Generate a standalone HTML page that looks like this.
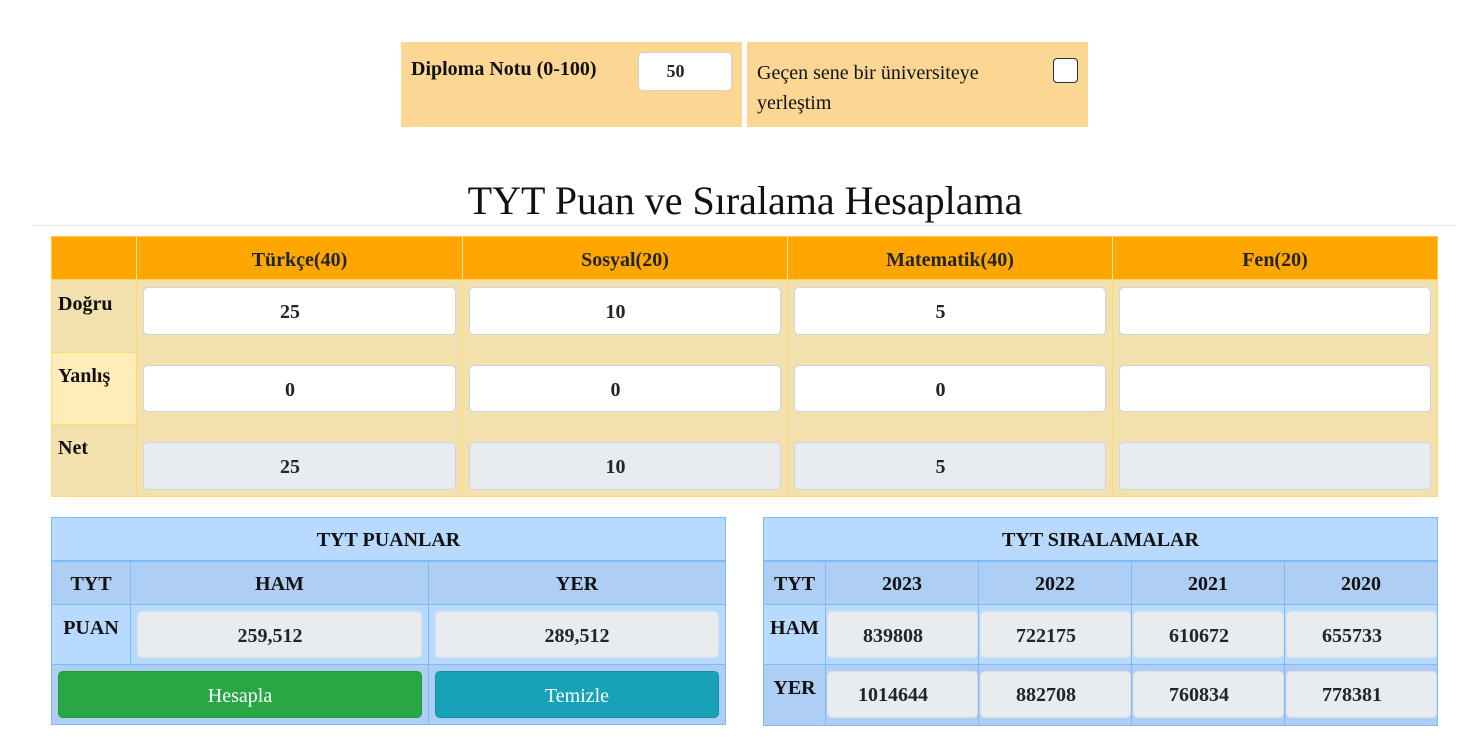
<!DOCTYPE html>
<html lang="tr">
<head>
<meta charset="utf-8">
<title>TYT Puan ve Sıralama Hesaplama</title>
<style>
html,body{margin:0;padding:0;background:#fff;width:1484px;height:747px;overflow:hidden}
body{position:relative;font-family:"Liberation Serif",serif;font-size:20px;color:#212529}
.a{position:absolute;box-sizing:border-box}
.t{position:absolute;white-space:nowrap;text-align:center;box-sizing:border-box}
.b{font-weight:bold;margin-top:1px}
.i{position:absolute;box-sizing:border-box;background:#fff;border:1px solid #ced4da;border-radius:5px;font-weight:bold;color:#212529;text-align:center;padding-right:19px}
.d{background:#e9ecef}
.n{border-color:#dde1e6;background:#e9ecef;padding-right:0}
</style>
</head>
<body>

<!-- top boxes -->
<div class="a" style="left:401px;top:42px;width:341px;height:85px;background:#fbd793"></div>
<div class="a" style="left:747px;top:42px;width:341px;height:85px;background:#fbd793"></div>
<div class="t b" style="left:411px;top:56px;line-height:24px;color:#111">Diploma Notu (0-100)</div>
<div class="i" style="left:638px;top:52px;width:94px;height:39px;line-height:37px;font-size:18px;padding-right:19px">50</div>
<div class="t" style="left:757px;top:58px;line-height:30px;text-align:left;color:#111">Geçen sene bir üniversiteye<br>yerleştim</div>
<div class="a" style="left:1053px;top:58px;width:25px;height:25px;background:#fff;border:1.5px solid #1d3045;border-radius:4px"></div>

<!-- title -->
<div class="t" style="left:33px;top:177px;width:1424px;line-height:48px;font-size:40px;color:#111">TYT Puan ve Sıralama Hesaplama</div>
<div class="a" style="left:32px;top:225px;width:1424px;height:1px;background:#e3e5e7"></div>

<!-- main table -->
<div class="a" style="left:51px;top:236px;width:1387px;height:261px;background:#f2e1ae"></div>
<div class="a" style="left:51px;top:236px;width:1387px;height:44px;background:#ffa700;border:1px solid #ffc94d;border-bottom:1px solid #ffd45e"></div>
<div class="a" style="left:52px;top:352px;width:84px;height:73px;background:#ffecb9;border-top:1px solid #ffdb6e;border-bottom:1px solid #ffdb6e"></div>
<div class="a" style="left:51px;top:280px;width:1px;height:217px;background:#ffdb6e"></div>
<div class="a" style="left:1437px;top:280px;width:1px;height:217px;background:#ffdb6e"></div>
<div class="a" style="left:51px;top:496px;width:1387px;height:1px;background:#ffdb6e"></div>
<div class="a" style="left:136px;top:237px;width:1px;height:42px;background:#ffe9a8"></div>
<div class="a" style="left:462px;top:237px;width:1px;height:42px;background:#ffe9a8"></div>
<div class="a" style="left:787px;top:237px;width:1px;height:42px;background:#ffe9a8"></div>
<div class="a" style="left:1112px;top:237px;width:1px;height:42px;background:#ffe9a8"></div>
<div class="a" style="left:136px;top:280px;width:1px;height:217px;background:#ffdb6e"></div>
<div class="a" style="left:462px;top:280px;width:1px;height:217px;background:#ffdb6e"></div>
<div class="a" style="left:787px;top:280px;width:1px;height:217px;background:#ffdb6e"></div>
<div class="a" style="left:1112px;top:280px;width:1px;height:217px;background:#ffdb6e"></div>

<div class="t b" style="left:137px;top:247px;width:325px;line-height:24px">Türkçe(40)</div>
<div class="t b" style="left:463px;top:247px;width:324px;line-height:24px">Sosyal(20)</div>
<div class="t b" style="left:788px;top:247px;width:324px;line-height:24px">Matematik(40)</div>
<div class="t b" style="left:1113px;top:247px;width:324px;line-height:24px">Fen(20)</div>

<div class="t b" style="left:58px;top:291px;line-height:24px;color:#111">Doğru</div>
<div class="t b" style="left:58px;top:363px;line-height:24px;color:#111">Yanlış</div>
<div class="t b" style="left:58px;top:435px;line-height:24px;color:#111">Net</div>

<div class="i" style="left:143px;top:287px;width:313px;height:48px;line-height:48px">25</div>
<div class="i" style="left:469px;top:287px;width:312px;height:48px;line-height:48px">10</div>
<div class="i" style="left:794px;top:287px;width:312px;height:48px;line-height:48px">5</div>
<div class="i" style="left:1119px;top:287px;width:312px;height:48px"></div>

<div class="i" style="left:143px;top:365px;width:313px;height:47px;line-height:48px">0</div>
<div class="i" style="left:469px;top:365px;width:312px;height:47px;line-height:48px">0</div>
<div class="i" style="left:794px;top:365px;width:312px;height:47px;line-height:48px">0</div>
<div class="i" style="left:1119px;top:365px;width:312px;height:47px"></div>

<div class="i d" style="left:143px;top:442px;width:313px;height:48px;line-height:48px">25</div>
<div class="i d" style="left:469px;top:442px;width:312px;height:48px;line-height:48px">10</div>
<div class="i d" style="left:794px;top:442px;width:312px;height:48px;line-height:48px">5</div>
<div class="i d" style="left:1119px;top:442px;width:312px;height:48px"></div>

<!-- left blue table -->
<div class="a" style="left:51px;top:517px;width:675px;height:208px;background:#b8daff;border:1px solid #7abaff"></div>
<div class="a" style="left:52px;top:562px;width:673px;height:42px;background:#aecff3"></div>
<div class="a" style="left:52px;top:665px;width:673px;height:59px;background:#aecff3"></div>
<div class="a" style="left:52px;top:560px;width:673px;height:2px;background:#7abaff"></div>
<div class="a" style="left:52px;top:604px;width:673px;height:1px;background:#7abaff"></div>
<div class="a" style="left:52px;top:664px;width:673px;height:1px;background:#7abaff"></div>
<div class="a" style="left:130px;top:562px;width:1px;height:102px;background:#7abaff"></div>
<div class="a" style="left:428px;top:562px;width:1px;height:162px;background:#7abaff"></div>

<div class="t b" style="left:52px;top:527px;width:673px;line-height:24px;color:#111">TYT PUANLAR</div>
<div class="t b" style="left:52px;top:571px;width:78px;line-height:24px;color:#111">TYT</div>
<div class="t b" style="left:131px;top:571px;width:297px;line-height:24px;color:#111">HAM</div>
<div class="t b" style="left:429px;top:571px;width:296px;line-height:24px;color:#111">YER</div>
<div class="t b" style="left:52px;top:615px;width:78px;line-height:24px;color:#111">PUAN</div>

<div class="i n" style="left:137px;top:611px;width:285px;height:47px;line-height:48px;padding-right:19px">259,512</div>
<div class="i n" style="left:435px;top:611px;width:284px;height:47px;line-height:48px;padding-right:0">289,512</div>

<div class="a" style="left:58px;top:671px;width:364px;height:47px;line-height:48px;background:#28a745;border:1px solid #1e9a3a;border-radius:5px;color:#fff;text-align:center">Hesapla</div>
<div class="a" style="left:435px;top:671px;width:284px;height:47px;line-height:48px;background:#17a2b8;border:1px solid #138ea3;border-radius:5px;color:#fff;text-align:center">Temizle</div>

<!-- right blue table -->
<div class="a" style="left:763px;top:517px;width:675px;height:209px;background:#b8daff;border:1px solid #7abaff"></div>
<div class="a" style="left:764px;top:562px;width:673px;height:42px;background:#aecff3"></div>
<div class="a" style="left:764px;top:665px;width:673px;height:60px;background:#aecff3"></div>
<div class="a" style="left:764px;top:560px;width:673px;height:2px;background:#7abaff"></div>
<div class="a" style="left:764px;top:604px;width:673px;height:1px;background:#7abaff"></div>
<div class="a" style="left:764px;top:664px;width:673px;height:1px;background:#7abaff"></div>
<div class="a" style="left:825px;top:562px;width:1px;height:163px;background:#7abaff"></div>
<div class="a" style="left:978px;top:562px;width:1px;height:163px;background:#7abaff"></div>
<div class="a" style="left:1131px;top:562px;width:1px;height:163px;background:#7abaff"></div>
<div class="a" style="left:1284px;top:562px;width:1px;height:163px;background:#7abaff"></div>

<div class="t b" style="left:764px;top:527px;width:673px;line-height:24px;color:#111">TYT SIRALAMALAR</div>
<div class="t b" style="left:764px;top:571px;width:61px;line-height:24px;color:#111">TYT</div>
<div class="t b" style="left:826px;top:571px;width:152px;line-height:24px;color:#111">2023</div>
<div class="t b" style="left:979px;top:571px;width:152px;line-height:24px;color:#111">2022</div>
<div class="t b" style="left:1132px;top:571px;width:152px;line-height:24px;color:#111">2021</div>
<div class="t b" style="left:1285px;top:571px;width:152px;line-height:24px;color:#111">2020</div>
<div class="t b" style="left:764px;top:615px;width:61px;line-height:24px;color:#111">HAM</div>
<div class="t b" style="left:764px;top:675px;width:61px;line-height:24px;color:#111">YER</div>

<div class="i n" style="left:827px;top:611px;width:151px;height:47px;line-height:48px;padding-right:19px">839808</div>
<div class="i n" style="left:980px;top:611px;width:151px;height:47px;line-height:48px;padding-right:19px">722175</div>
<div class="i n" style="left:1133px;top:611px;width:151px;height:47px;line-height:48px;padding-right:19px">610672</div>
<div class="i n" style="left:1286px;top:611px;width:151px;height:47px;line-height:48px;padding-right:19px">655733</div>
<div class="i n" style="left:827px;top:671px;width:151px;height:47px;line-height:46px;padding-right:19px">1014644</div>
<div class="i n" style="left:980px;top:671px;width:151px;height:47px;line-height:46px;padding-right:19px">882708</div>
<div class="i n" style="left:1133px;top:671px;width:151px;height:47px;line-height:46px;padding-right:19px">760834</div>
<div class="i n" style="left:1286px;top:671px;width:151px;height:47px;line-height:46px;padding-right:19px">778381</div>

</body>
</html>
